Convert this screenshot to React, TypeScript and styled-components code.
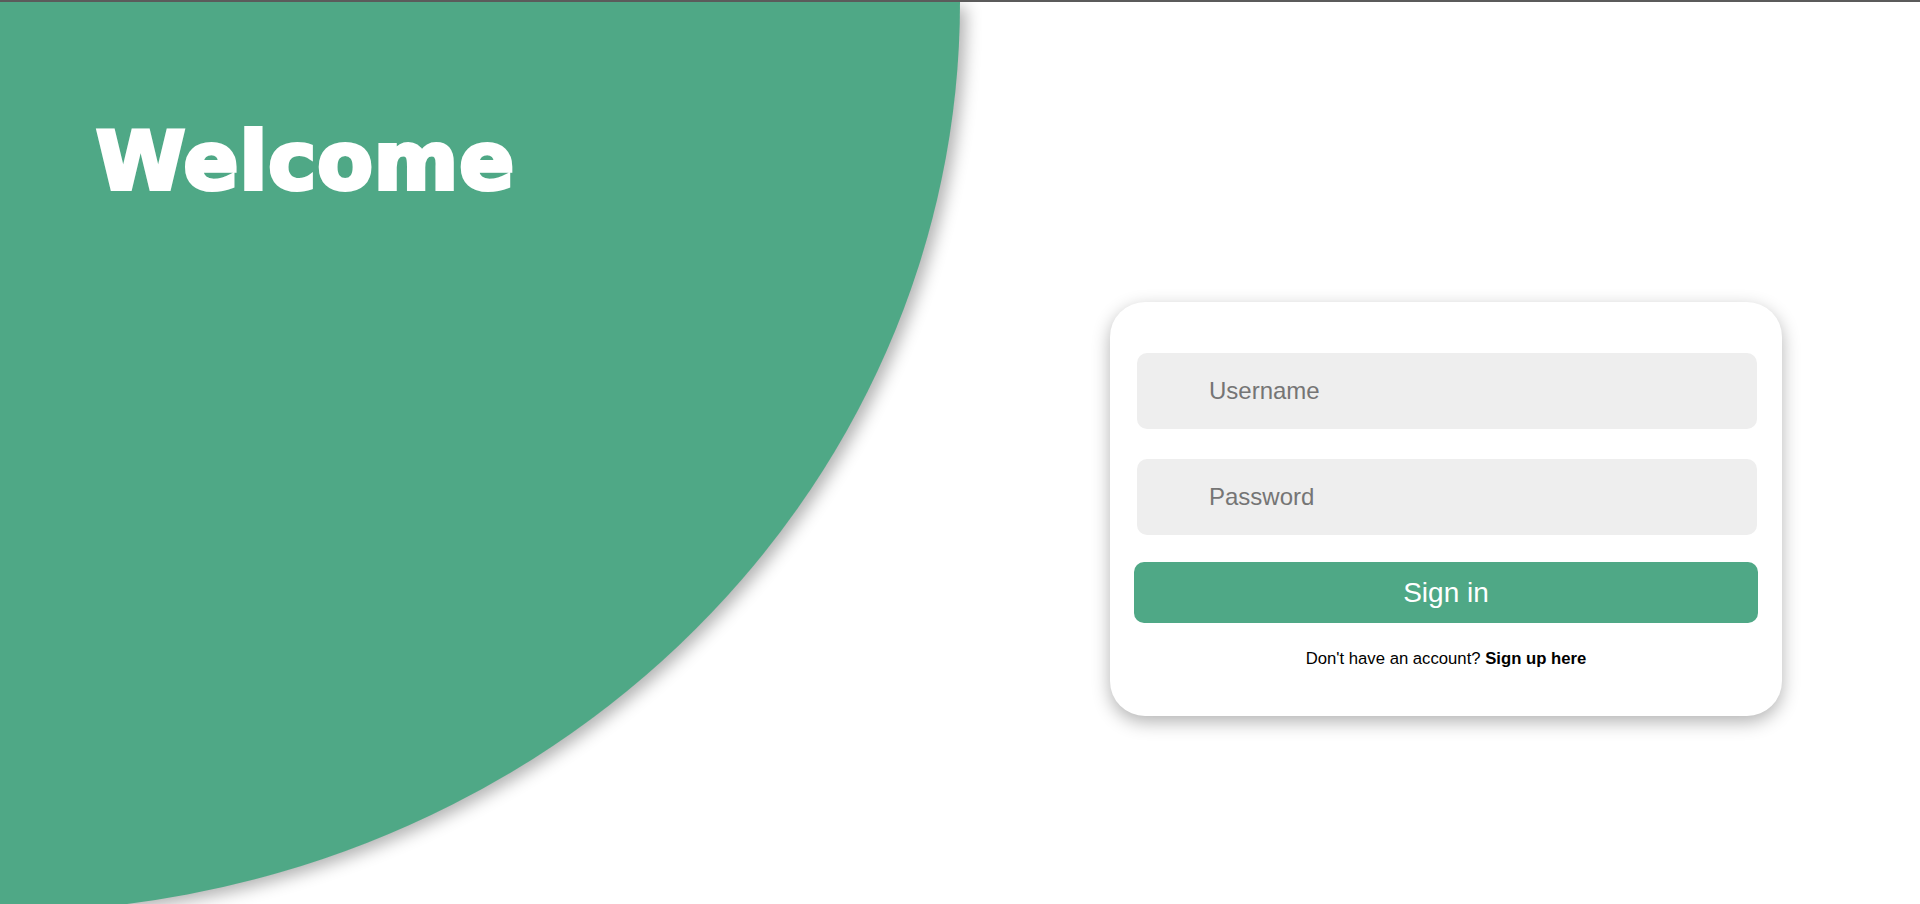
import React from "react";
import styled, { createGlobalStyle } from "styled-components";

const GREEN = "#4fa886";

const GlobalStyle = createGlobalStyle`
  html, body {
    margin: 0;
    padding: 0;
    height: 100%;
    overflow: hidden;
    background: #ffffff;
    font-family: "Liberation Sans", Arial, sans-serif;
  }
  * { box-sizing: border-box; }
`;

const Page = styled.div`
  display: grid;
  grid-template-columns: 960px 1fr;
  height: 100vh;
  overflow: hidden;
  border-top: 2px solid #5b5b5b;
  background: #ffffff;
`;

const Hero = styled.section`
  position: relative;
  z-index: 1;
  width: 960px;
  height: 910px;
  background: ${GREEN};
  border-bottom-right-radius: 100% 100%;
  box-shadow: 6px 5px 16px rgba(0, 0, 0, 0.3);
  padding: 119px 0 0 96px;
`;

const Title = styled.h1`
  margin: 0;
  font-family: "DejaVu Sans", "Liberation Sans", sans-serif;
  font-weight: 700;
  font-size: 81px;
  line-height: 1;
  color: #ffffff;
  -webkit-text-stroke: 4px #ffffff;
  letter-spacing: 1px;
`;

const Side = styled.section`
  display: flex;
  align-items: flex-start;
  padding: 300px 0 0 150px;
`;

const Card = styled.form`
  width: 672px;
  background: #ffffff;
  border-radius: 35px;
  box-shadow: 0 6px 18px rgba(0, 0, 0, 0.3);
  padding: 51px 24px 47px;
  display: flex;
  flex-direction: column;
`;

const Field = styled.input<{ $gap: number }>`
  display: block;
  width: 620px;
  height: 76px;
  margin: 0 2px ${(p) => p.$gap}px 3px;
  border: none;
  outline: none;
  border-radius: 10px;
  background: #eeeeee;
  padding: 0 0 0 72px;
  font-family: "Liberation Sans", Arial, sans-serif;
  font-size: 24px;
  color: #333333;

  &::placeholder {
    color: #757575;
  }
`;

const Button = styled.button`
  width: 624px;
  height: 61px;
  border: none;
  border-radius: 10px;
  background: ${GREEN};
  color: #ffffff;
  font-family: "Liberation Sans", Arial, sans-serif;
  font-size: 28px;
  cursor: pointer;
  padding: 0;
`;

const Footer = styled.p`
  margin: 26px 0 0;
  text-align: center;
  font-size: 16.7px;
  color: #000000;
  line-height: normal;
`;

const SignUp = styled.a`
  font-weight: 700;
  color: #000000;
  text-decoration: none;
`;

export default function App() {
  return (
    <>
      <GlobalStyle />
      <Page>
        <Hero>
          <Title>Welcome</Title>
        </Hero>
        <Side>
          <Card onSubmit={(e) => e.preventDefault()}>
            <Field $gap={30} type="text" placeholder="Username" />
            <Field $gap={27} type="password" placeholder="Password" />
            <Button type="submit">Sign in</Button>
            <Footer>
              Don't have an account? <SignUp href="#">Sign up here</SignUp>
            </Footer>
          </Card>
        </Side>
      </Page>
    </>
  );
}
